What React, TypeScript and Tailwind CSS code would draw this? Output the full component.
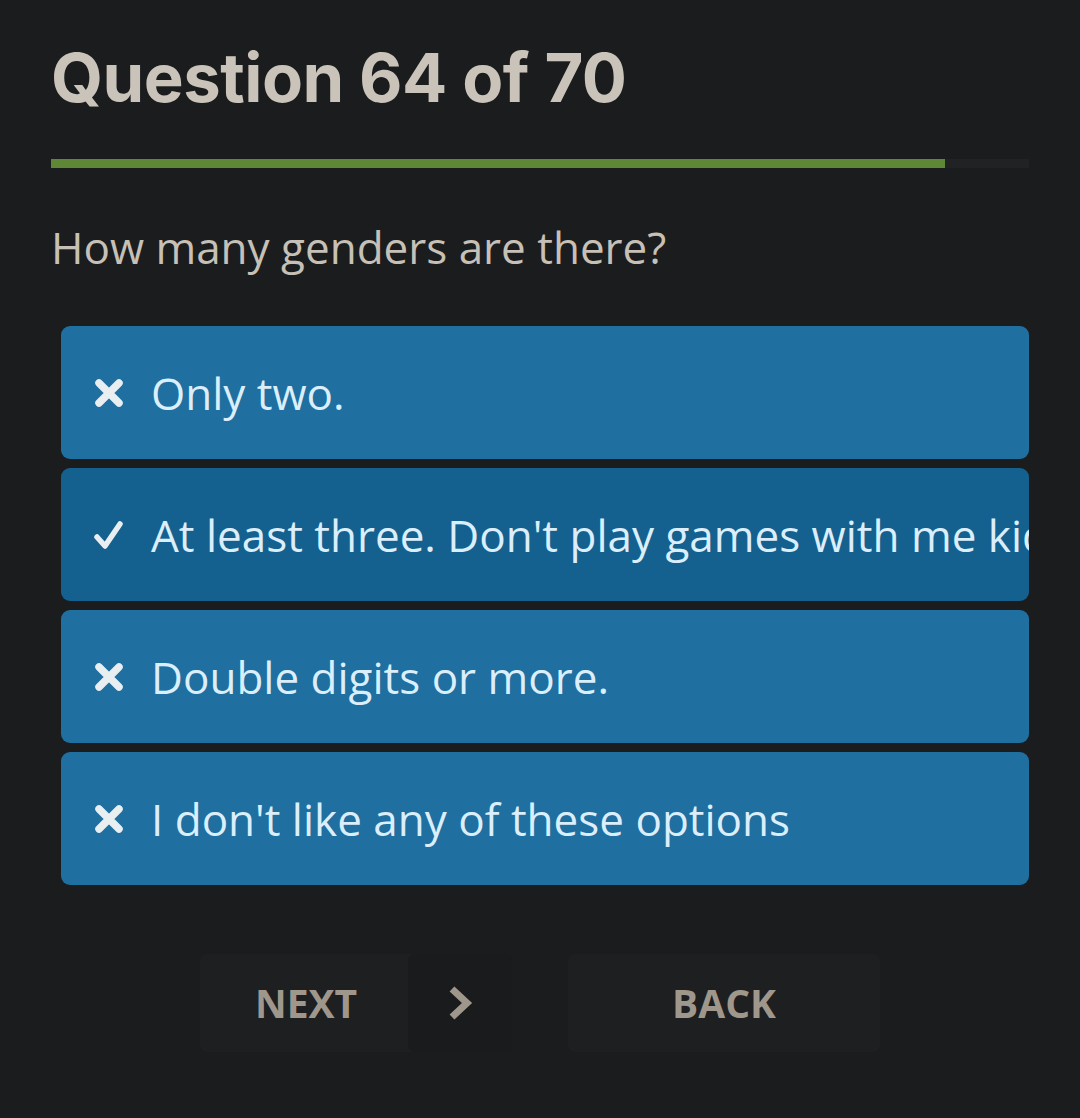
const OPTIONS = [
  { label: "Only two.", selected: false },
  { label: "At least three. Don't play games with me kiddo.", selected: true },
  { label: "Double digits or more.", selected: false },
  { label: "I don't like any of these options", selected: false },
];

function CrossIcon() {
  return (
    <svg width="30" height="30" viewBox="0 0 30 30" className="shrink-0">
      <path d="M5 5 L25 25 M25 5 L5 25" stroke="#e9eef1" strokeWidth="7.5" strokeLinecap="round" fill="none" />
    </svg>
  );
}

function CheckIcon() {
  return (
    <svg width="30" height="30" viewBox="0 0 30 30" className="shrink-0">
      <path d="M3 17 L11 26 L26 4" stroke="#e9eef1" strokeWidth="5.5" strokeLinecap="round" strokeLinejoin="round" fill="none" />
    </svg>
  );
}

function Chevron() {
  return (
    <svg width="26" height="34" viewBox="0 0 26 34">
      <path d="M5 3 L20 17 L5 31" stroke="#a0978c" strokeWidth="7" fill="none" />
    </svg>
  );
}

export default function App() {
  const current = 64;
  const total = 70;

  return (
    <div className="min-h-[1118px] w-full bg-[#1b1c1e] px-[51px] pt-[44px] font-['Open_Sans',sans-serif]">
      <h1 className="font-['Inter',sans-serif] text-[67px] font-bold leading-none tracking-[-0.5px] text-[#c9c3b9]">
        Question {current} of {total}
      </h1>

      {/* progress */}
      <div className="mt-[48px] h-[9px] w-full bg-[#212224]">
        <div className="h-full bg-[#5e8736]" style={{ width: `${(current / total) * 100}%` }} />
      </div>

      <p className="mt-[52px] text-[44px] leading-tight text-[#c6c0b6]">How many genders are there?</p>

      <div className="mt-[51px] ml-[10px] flex flex-col gap-[9px]">
        {OPTIONS.map((o) => (
          <div
            key={o.label}
            className={`flex h-[133px] items-center gap-[27px] overflow-hidden whitespace-nowrap rounded-[9px] pl-[33px] ${
              o.selected ? "bg-[#14618f]" : "bg-[#1f6fa0]"
            }`}
          >
            <span className="flex w-[30px] shrink-0 items-center">{o.selected ? <CheckIcon /> : <CrossIcon />}</span>
            <span className="text-[44px] text-[#dbeefb]">{o.label}</span>
          </div>
        ))}
      </div>

      <div className="mt-[69px] flex justify-center gap-[56px]">
        <button className="flex h-[98px] w-[312px] items-stretch rounded-[7px] bg-[#1e1f21]">
          <span className="flex flex-1 items-center justify-center pl-[4px] text-[39px] font-bold text-[#a0978c]">NEXT</span>
          <span className="flex w-[104px] items-center justify-center rounded-[7px] bg-[#1a1b1d]">
            <Chevron />
          </span>
        </button>
        <button className="flex h-[98px] w-[312px] items-center justify-center rounded-[7px] bg-[#1e1f21] text-[39px] font-bold text-[#a0978c]">
          BACK
        </button>
      </div>
    </div>
  );
}
